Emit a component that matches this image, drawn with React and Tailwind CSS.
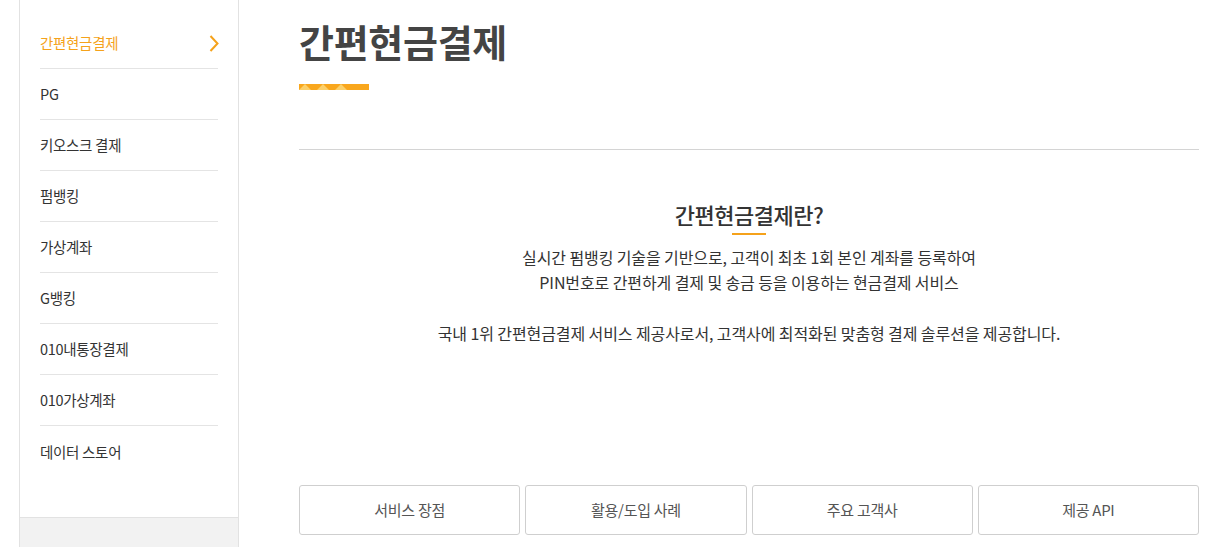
const menu = [
  "간편현금결제",
  "PG",
  "키오스크 결제",
  "펌뱅킹",
  "가상계좌",
  "G뱅킹",
  "010내통장결제",
  "010가상계좌",
  "데이터 스토어",
];

const tabs = ["서비스 장점", "활용/도입 사례", "주요 고객사", "제공 API"];

const font = { fontFamily: '"Noto Sans CJK KR", "Noto Sans", sans-serif' };

function TitleBar() {
  return (
    <svg width="70" height="6" viewBox="0 0 70 6" className="block">
      <rect width="70" height="6" fill="#f9a71d" />
      <polygon points="0,6 6,0 12,6" fill="#fcd06a" />
      <polygon points="18,6 24,0 30,6" fill="#fcd06a" />
      <polygon points="36,6 42,0 48,6" fill="#fcd06a" />
    </svg>
  );
}

function Chevron() {
  return (
    <svg width="10" height="17" viewBox="0 0 10 17" className="-mr-[1px]">
      <polyline points="1.5,1 8.5,8.5 1.5,16" fill="none" stroke="#f5a21b" strokeWidth="2" />
    </svg>
  );
}

export default function App() {
  return (
    <div className="flex h-[547px] w-[1226px] overflow-hidden bg-white" style={font}>
      <aside className="ml-[19px] flex w-[220px] shrink-0 flex-col border-x border-[#e2e2e2]">
        <ul className="px-5 pt-[18px] pb-[40px]">
          {menu.map((item, i) => (
            <li
              key={item}
              className={`flex h-[51px] items-center justify-between text-[14.5px] tracking-[-0.3px] ${
                i < menu.length - 1 ? "border-b border-[#e4e4e4]" : ""
              } ${i === 0 ? "text-[#f5a21b]" : "text-[#333]"}`}
            >
              <span>{item}</span>
              {i === 0 && <Chevron />}
            </li>
          ))}
        </ul>
        <div className="flex-1 border-t border-[#e2e2e2] bg-[#f2f2f2] px-8 pt-[27px] text-[13px] font-semibold text-[#bbb]">
          간편현금결제 도입문의
        </div>
      </aside>

      <main className="ml-[60px] w-[900px] shrink-0">
        <h1 className="pt-[17px] text-[38px] leading-[48px] font-bold tracking-[-0.3px] text-[#444]">
          간편현금결제
        </h1>
        <div className="mt-[19px]">
          <TitleBar />
        </div>
        <div className="mt-[59px] border-t border-[#d4d4d4]" />

        <section className="flex flex-col items-center pt-[49px] text-[#333]">
          <h2 className="text-[22px] leading-[30px] font-medium tracking-[-0.5px]">간편현금결제란?</h2>
          <div className="mt-[4px] h-[2px] w-[34px] bg-[#f5a21b]" />
          <div className="mt-[10px] text-center text-[16px] leading-[25px] tracking-[-0.1px]">
            <p>실시간 펌뱅킹 기술을 기반으로, 고객이 최초 1회 본인 계좌를 등록하여</p>
            <p>PIN번호로 간편하게 결제 및 송금 등을 이용하는 현금결제 서비스</p>
            <p className="mt-[26px]">
              국내 1위 간편현금결제 서비스 제공사로서, 고객사에 최적화된 맞춤형 결제 솔루션을 제공합니다.
            </p>
          </div>
        </section>

        <div className="mt-[139px] grid grid-cols-4 gap-[5px]">
          {tabs.map((t) => (
            <button
              key={t}
              type="button"
              className="h-[50px] rounded-[3px] border border-[#cfcfcf] bg-white text-[15px] tracking-[-0.3px] text-[#555]"
            >
              {t}
            </button>
          ))}
        </div>
      </main>
    </div>
  );
}
